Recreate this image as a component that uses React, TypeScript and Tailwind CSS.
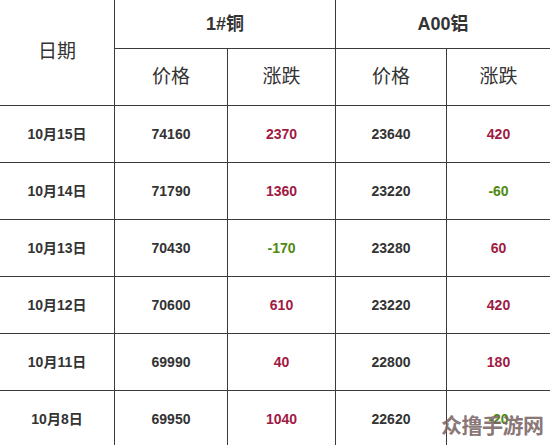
import React from "react";

const RED = "text-[#a01a44]";
const GREEN = "text-[#4e8a10]";

type Row = { d: string; cu: string; cuc: string; al: string; alc: string };

const rows: Row[] = [
  { d: "10月15日", cu: "74160", cuc: "2370", al: "23640", alc: "420" },
  { d: "10月14日", cu: "71790", cuc: "1360", al: "23220", alc: "-60" },
  { d: "10月13日", cu: "70430", cuc: "-170", al: "23280", alc: "60" },
  { d: "10月12日", cu: "70600", cuc: "610", al: "23220", alc: "420" },
  { d: "10月11日", cu: "69990", cuc: "40", al: "22800", alc: "180" },
  { d: "10月8日", cu: "69950", cuc: "1040", al: "22620", alc: "-20" },
];

const font = "font-['Liberation_Sans','Noto_Sans_CJK_SC',sans-serif]";

function Cell({ children, className = "" }: { children?: React.ReactNode; className?: string }) {
  return (
    <div className={`bg-white flex items-center justify-center ${className}`}>{children}</div>
  );
}

function Change({ v }: { v: string }) {
  return <span className={v.startsWith("-") ? GREEN : RED}>{v}</span>;
}

export default function App() {
  return (
    <div className={`relative w-[550px] h-[445px] overflow-hidden bg-white ${font}`}>
      <div className="grid grid-cols-[114px_112px_107px_110px_1fr] grid-rows-[48px_56px_56px_56px_56px_56px_56px_56px] gap-px bg-[#3a3a3a] text-[#333]">
        <Cell className="row-span-2 text-[19px]">日期</Cell>
        <Cell className="col-span-2 text-[18px] font-bold">1#铜</Cell>
        <Cell className="col-span-2 text-[18px] font-bold">A00铝</Cell>
        <Cell className="text-[19px]">价格</Cell>
        <Cell className="text-[19px]">涨跌</Cell>
        <Cell className="text-[19px]">价格</Cell>
        <Cell className="text-[19px]">涨跌</Cell>
        {rows.map((r) => (
          <React.Fragment key={r.d}>
            <Cell className="text-[14px] font-bold">{r.d}</Cell>
            <Cell className="text-[14px] font-bold">{r.cu}</Cell>
            <Cell className="text-[14px] font-bold">
              <Change v={r.cuc} />
            </Cell>
            <Cell className="text-[14px] font-bold">{r.al}</Cell>
            <Cell className="text-[14px] font-bold">
              <Change v={r.alc} />
            </Cell>
          </React.Fragment>
        ))}
      </div>
      <div className="absolute left-[441px] top-[415px] text-[21px] font-bold leading-none tracking-[-0.5px] text-[#7a6464]/90">
        众撸手游网
      </div>
    </div>
  );
}
